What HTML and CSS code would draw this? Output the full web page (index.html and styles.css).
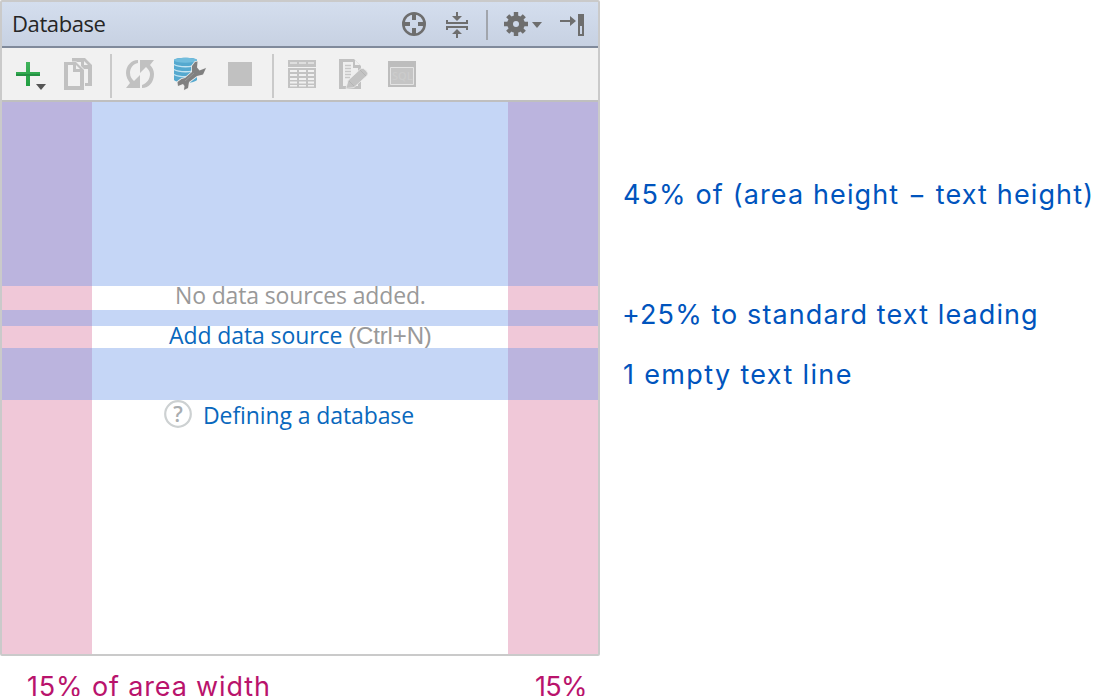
FILE: index.html
```html
<!DOCTYPE html>
<html lang="en">
<head>
<meta charset="utf-8">
<title>Database</title>
<link rel="stylesheet" href="styles.css">
</head>
<body>
<main class="figure">
  <section class="panel">
    <header class="titlebar">
      <h1 class="title">Database</h1>
      <svg class="target" width="24" height="44" viewBox="402 2 24 44" fill="none" stroke="#6e6e6e"><circle cx="414" cy="24" r="10.7" stroke-width="2.6"/><path d="M414 13v7M414 28v7M403 24h7M418 24h7" stroke-width="4"/></svg>
      <svg class="collapse" width="22" height="44" viewBox="446 2 22 44" fill="#6e6e6e"><path d="M446 20h2v2h18v-2h2v4h-22zM446 30v-4h22v4h-2v-2h-18v2zM456 12h2v4h4l-5 5-5-5h4zM456 38h2v-4h4l-5-5-5 5h4z"/></svg>
      <span class="separator title-separator"></span>
      <svg class="gear" width="38" height="44" viewBox="504 2 38 44"><path d="M516 12v24M504 24h24M507.700 15.700l16.600 16.600M507.700 32.300l16.600-16.600" stroke="#6e6e6e" stroke-width="4.400"/><circle cx="516" cy="24" r="5.900" fill="none" stroke="#6e6e6e" stroke-width="5.800"/><circle cx="516" cy="24" r="3" fill="#cdd7e8"/><path d="M532 22h10l-5 6z" fill="#6e6e6e"/></svg>
      <svg class="hide" width="24" height="44" viewBox="560 2 24 44" fill="#6e6e6e"><path d="M560 20h10v-4l6 5-6 5v-4h-10zM578 14h6v22h-6zM580 26v8h2v-8z" fill-rule="evenodd"/></svg>
    </header>
    <div class="toolbar">
      <svg class="add" width="30" height="52" viewBox="16 48 30 52"><defs><linearGradient id="green" x2="0" y2="1"><stop stop-color="#41b35c"/><stop offset="1" stop-color="#219f42"/></linearGradient></defs><path d="M26 62h4v10h10v4H30v10h-4V76H16v-4h10z" fill="url(#green)"/><path d="M16 74h24v2H16z" fill="#249143"/><path d="M36 84h10l-5 6z" fill="#555"/></svg>
      <svg class="copy" width="28" height="52" viewBox="64 48 28 52" fill="#c1c1c1" fill-rule="evenodd"><path d="M72 58h13l7 7v21h-7v-3h3V69h-7v-7h-9z"/><path d="M84 61v4h4z" fill="#f1f1f1"/><path d="M63.500 61.500h13l8 8V90.500h-21z" fill="#f1f1f1"/><path d="M64 62h12l8 8v20H64zM68 65v21h12V72h-7v-7zM76 65v4h4z"/></svg>
      <span class="separator first-separator"></span>
      <svg class="refresh" width="28" height="52" viewBox="126 48 28 52" fill="#c1c1c1"><path d="M138 60c-7 0-12 6-12 13 0 4 2 7 4 10l-4 5h14V75l-6 6c-2-2-4-4-4-8 0-5 3-9 8-10z"/><path d="M142 88c7 0 12-6 12-14 0-4-2-7-4-9l4-5h-14v13l6-6c2 2 4 4 4 7 0 5-3 9-8 11z"/></svg>
      <svg class="datasource" width="34" height="52" viewBox="173 48 34 52"><path d="M174 60c0-3 23-3 23 0v20c-4 4-19 4-23 0z" fill="#55a9cf"/><ellipse cx="185.500" cy="60.300" rx="11.500" ry="2.500" fill="#72bddd"/><path d="M174 64.500c5 3 18 3 23 0M174 69.500c5 3 18 3 23 0M174 74.500c5 3 18 3 23 0" fill="none" stroke="#c4e4f1" stroke-width="1.300"/><path d="M197.500 61.500L195 62l-3 4v6l-7 6-3.500 1-4 3 .5 4 5-2 1.500 2-.5 4 4-2 1-6 8-6 6-1.500 3-6.500-6.500 2.500-2.500-3z" fill="#808080" stroke="#ededed" stroke-width="1.600" paint-order="stroke" stroke-linejoin="round"/><path d="M194 73l-9 8" stroke="#969696"/></svg>
      <svg class="stop" width="24" height="52" viewBox="228 48 24 52"><path d="M228 62h24v24h-24z" fill="#c1c1c1"/></svg>
      <span class="separator second-separator"></span>
      <svg class="table" width="28" height="52" viewBox="288 48 28 52"><path d="M288 60h28v7h-28zM288 68h28v20h-28z" fill="#c3c3c3"/><path d="M290 62h7v2h-7zM299 62h7v2h-7zM308 62h6v2h-6z" fill="#dedede"/><path d="M290 70h7v2h-7zM299 70h7v2h-7zM308 70h6v2h-6zM290 74h7v2h-7zM299 74h7v2h-7zM308 74h6v2h-6zM290 78h7v2h-7zM299 78h7v2h-7zM308 78h6v2h-6zM290 81.500h7v2h-7zM299 81.500h7v2h-7zM308 81.500h6v2h-6zM290 85h7v1.500h-7zM299 85h7v1.500h-7zM308 85h6v1.500h-6z" fill="#f1f1f1"/></svg>
      <svg class="edit" width="29" height="52" viewBox="339 48 29 52"><path d="M339 59h15l7 7v23h-22z" fill="#c1c1c1"/><path d="M343 62h10v6h5v18h-15z" fill="#efefef"/><path d="M355 60v5h5z" fill="#efefef"/><path d="M345 65.500h6M345 68.500h6M345 71.500h6M345 74.500h6M345 77.500h5" stroke="#c8c8c8" stroke-width="1.300"/><path d="M346 88.500l2-8 13-12q2-1 5 2t1 5l-13 12z" fill="#c3c3c3" stroke="#efefef" stroke-width=".7"/><path d="M349 81l5 5M360 70l6 6" stroke="#b5b5b5"/></svg>
      <svg class="console" width="28" height="52" viewBox="388 48 28 52"><path d="M388 61h28v26h-28z" fill="#bdbdbd"/><path d="M390.500 67.500h23v17h-23z" fill="#c5c5c5" stroke="#e4e4e4"/><text x="392" y="80" class="console-label">SQL</text></svg>
    </div>
    <div class="area">
      <div class="band top-gap"></div>
      <p class="row empty">No data sources added.</p>
      <div class="band leading"></div>
      <p class="row add-source"><a class="link">Add data source</a><span class="shortcut">(Ctrl+N)</span></p>
      <div class="band blank-line"></div>
      <p class="row help"><svg width="28" height="28" viewBox="0 0 28 28"><circle cx="14" cy="14" r="12.800" fill="#fff" stroke="#cdd1d2" stroke-width="2.200"/><text x="14" y="21.500" class="question">?</text></svg><a class="link define">Defining a database</a></p>
    </div>
  </section>
  <aside class="notes">
    <p class="note note-height">45% of (area height − text height)</p>
    <p class="note note-leading">+25% to standard text leading</p>
    <p class="note note-line">1 empty text line</p>
  </aside>
  <footer class="widths"><span class="left-width">15% of area width</span><span class="right-width">15%</span></footer>
</main>
</body>
</html>
```
FILE: styles.css
```css
* { box-sizing: border-box; }
body { margin: 0; background: #fff; }
h1, p { margin: 0; font-weight: 400; }
svg { display: block; flex: none; }

.figure { width: 1093px; height: 696px; overflow: hidden; display: grid; grid-template: 656px 40px / 600px 1fr; }
.panel { border: 2px solid #cacaca; border-radius: 2px; display: flex; flex-direction: column; font-family: "Noto Sans", "Open Sans", sans-serif; }
.titlebar { height: 46px; display: flex; background: linear-gradient(#d4deee, #c7d1e2); border-bottom: 2px solid #808a9b; }
.title { width: 400px; padding-left: 10px; font: 22px/43px "Open Sans", sans-serif; letter-spacing: -0.4px; color: #252525; }
.separator { width: 2px; flex: none; background: #cacaca; }
.collapse { margin-left: 20px; }
.title-separator { height: 30px; margin: 8px 16px 0 18px; background: #a1a5ac; }
.hide { margin-left: 18px; }

.toolbar { height: 54px; display: flex; padding-left: 14px; background: #f1f1f1; border-bottom: 2px solid #bfbfbf; }
.copy { margin-left: 18px; }
.first-separator { height: 44px; margin: 6px 14px 0 18px; }
.datasource { margin-left: 19px; }
.stop { margin-left: 21px; }
.second-separator { height: 44px; margin: 6px 14px 0 20px; }
.edit { margin-left: 23px; }
.console { margin-left: 20px; }
.console-label { font: 600 11px "Open Sans", sans-serif; fill: #cccccc; }

.area { flex: 1; display: flex; flex-direction: column; background: linear-gradient(90deg, #f0c8d8 90px, #fff 90px 506px, #f0c8d8 506px); }
.band { flex: none; background: linear-gradient(90deg, #bbb4de 90px, #c5d6f6 90px 506px, #bbb4de 506px); }
.top-gap { height: 184px; }
.leading { height: 16px; }
.blank-line { height: 52px; }
.row { display: flex; white-space: nowrap; font-family: "Open Sans", sans-serif; font-size: 23px; color: #999; }
.empty { height: 24px; line-height: 18px; padding-left: 173px; letter-spacing: -0.15px; }
.add-source { height: 22px; line-height: 18px; padding-left: 167px; }
.link { color: #0968bd; letter-spacing: -0.1px; }
.shortcut { margin-left: 6px; font: 24px/20px "Liberation Sans", Arial, sans-serif; letter-spacing: -0.15px; }
.help { padding-left: 162px; line-height: 30px; }
.define { margin-left: 11px; }
.question { font: 600 21px "Open Sans", sans-serif; text-anchor: middle; fill: #a9adb0; }

.notes { padding: 177px 0 0 23px; }
.note { height: 36px; white-space: nowrap; font: 27px/36px Inter, sans-serif; color: #0054bd; }
.note-height { letter-spacing: 1.13px; }
.note-leading { margin: 84px 0 0 -1px; letter-spacing: 1.1px; }
.note-line { margin-top: 24px; letter-spacing: 1.35px; }
.widths { grid-column: 1 / -1; padding: 13px 0 0 27px; display: flex; white-space: nowrap; font: 27px/36px Inter, sans-serif; color: #b9136c; }
.left-width { width: 508px; letter-spacing: 0.85px; }
.right-width { letter-spacing: -0.7px; }
```
